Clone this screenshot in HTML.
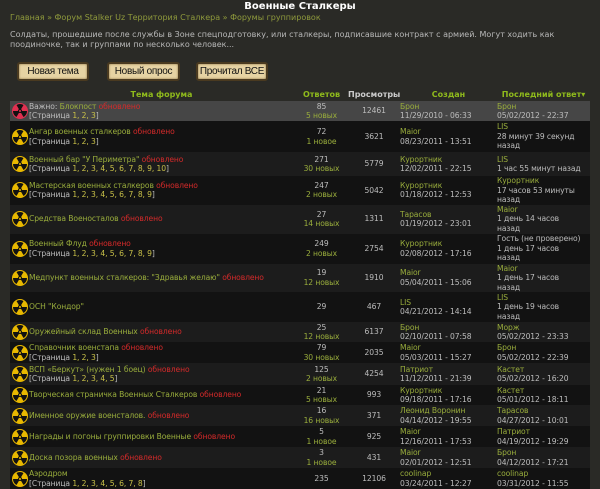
<!DOCTYPE html>
<html><head><meta charset="utf-8">
<style>
*{margin:0;padding:0;box-sizing:border-box}
body{width:600px;height:488px;background:#2a2a26;font-family:"DejaVu Sans","Liberation Sans",sans-serif;font-size:8px;color:#bdbdbd;overflow:hidden;position:relative}
.t{position:absolute;left:0;width:600px;text-align:center;top:1px;color:#fff;font-weight:bold;font-size:10px}
.bc{position:absolute;left:10px;top:13px;color:#8f9a3c;font-size:8px}
.ds{position:absolute;left:10px;top:30px;width:590px;line-height:10px;color:#b8b8b8}
.btn{position:absolute;top:62px;height:19px;background:#e6d3a3;border:2px solid #4a3a20;border-radius:3px;color:#111;font-family:"Liberation Sans",sans-serif;font-size:10px;line-height:15px;text-align:center;white-space:nowrap;letter-spacing:-0.3px;box-shadow:0 0 2px #8a7040 inset}
table{position:absolute;left:10px;top:88px;width:580px;border-collapse:collapse;table-layout:fixed}
th{color:#8fba1c;font-weight:bold;height:13px;font-size:8px;text-align:center;vertical-align:middle;white-space:nowrap}
td{vertical-align:middle;line-height:9.5px;padding:0;font-size:7.6px;letter-spacing:-0.1px;overflow:hidden}
tr.a td{background:#121212}tr.b td{background:#1c1c1c}tr.h td{background:#464646}
.ic{display:block;width:16px;height:16px;margin-left:2px}
.g{color:#99ad3c}.r{color:#d42a2a}.y{color:#c8c048}
.c{text-align:center}.n{color:#99ad3c}
.p{padding-left:1px}
</style></head><body>
<div class="t">Военные Сталкеры</div>
<div class="bc">Главная » Форум Stalker Uz Территория Сталкера » Форумы группировок</div>
<div class="ds">Солдаты, прошедшие после службы в Зоне спецподготовку, или сталкеры, подписавшие контракт с армией. Могут ходить как поодиночке, так и группами по несколько человек...</div>
<div class="btn" style="left:17px;width:72px">Новая тема</div>
<div class="btn" style="left:107px;width:73px">Новый опрос</div>
<div class="btn" style="left:196px;width:72px">Прочитал ВСЕ</div>
<svg width="0" height="0" style="position:absolute"><defs>
<g id="rad"><circle cx="8" cy="8" r="8" fill="#e8b800"/><path d="M8 8 L4.5 2 A7 7 0 0 1 11.5 2Z M8 8 L15 8 A7 7 0 0 1 11.5 14Z M8 8 L4.5 14 A7 7 0 0 1 1 8Z" fill="#111"/><circle cx="8" cy="8" r="2" fill="#111"/><circle cx="8" cy="8" r="1" fill="#e8b800"/></g>
<g id="radr"><circle cx="8" cy="8" r="8" fill="#e03050"/><path d="M8 8 L4.5 2 A7 7 0 0 1 11.5 2Z M8 8 L15 8 A7 7 0 0 1 11.5 14Z M8 8 L4.5 14 A7 7 0 0 1 1 8Z" fill="#111"/><circle cx="8" cy="8" r="2" fill="#111"/><circle cx="8" cy="8" r="1" fill="#e03050"/></g>
</defs></svg>
<table>
<colgroup><col style="width:18px"><col style="width:267px"><col style="width:53px"><col style="width:52px"><col style="width:97px"><col style="width:93px"></colgroup>
<tr><th></th><th>Тема форума</th><th>Ответов</th><th style="color:#ccc">Просмотры</th><th>Создан</th><th>Последний ответ▾</th></tr>
<tr class="h" style="height:20px"><td><svg class="ic"><use href="#radr"/></svg></td><td class="p">Важно: <span class="g">Блокпост</span> <span class="r">обновлено</span><br>[Страница <span class="y">1, 2, 3</span>]</td><td class="c">85<br><span class="n">5 новых</span></td><td class="c">12461</td><td><span class="g">Брон</span><br>11/29/2010 - 06:33</td><td><span class="g">Брон</span><br>05/02/2012 - 22:37</td></tr>
<tr class="a" style="height:31px"><td><svg class="ic"><use href="#rad"/></svg></td><td class="p"><span class="g">Ангар военных сталкеров</span> <span class="r">обновлено</span><br>[Страница <span class="y">1, 2, 3</span>]</td><td class="c">72<br><span class="n">1 новое</span></td><td class="c">3621</td><td><span class="g">Maior</span><br>08/23/2011 - 13:51</td><td><span class="g">LIS</span><br>28 минут 39 секунд назад</td></tr>
<tr class="b" style="height:24px"><td><svg class="ic"><use href="#rad"/></svg></td><td class="p"><span class="g">Военный бар "У Периметра"</span> <span class="r">обновлено</span><br>[Страница <span class="y">1, 2, 3, 4, 5, 6, 7, 8, 9, 10</span>]</td><td class="c">271<br><span class="n">30 новых</span></td><td class="c">5779</td><td><span class="g">Курортник</span><br>12/02/2011 - 22:15</td><td><span class="g">LIS</span><br><span style="white-space:nowrap">1 час 55 минут назад</span></td></tr>
<tr class="a" style="height:28px"><td><svg class="ic"><use href="#rad"/></svg></td><td class="p"><span class="g">Мастерская военных сталкеров</span> <span class="r">обновлено</span><br>[Страница <span class="y">1, 2, 3, 4, 5, 6, 7, 8, 9</span>]</td><td class="c">247<br><span class="n">2 новых</span></td><td class="c">5042</td><td><span class="g">Курортник</span><br>01/18/2012 - 12:53</td><td><span class="g">Курортник</span><br>17 часов 53 минуты<br>назад</td></tr>
<tr class="b" style="height:29px"><td><svg class="ic"><use href="#rad"/></svg></td><td class="p"><span class="g">Средства Военосталов</span> <span class="r">обновлено</span></td><td class="c">27<br><span class="n">14 новых</span></td><td class="c">1311</td><td><span class="g">Тарасов</span><br>01/19/2012 - 23:01</td><td><span class="g">Maior</span><br>1 день 14 часов<br>назад</td></tr>
<tr class="a" style="height:30px"><td><svg class="ic"><use href="#rad"/></svg></td><td class="p"><span class="g">Военный Флуд</span> <span class="r">обновлено</span><br>[Страница <span class="y">1, 2, 3, 4, 5, 6, 7, 8, 9</span>]</td><td class="c">249<br><span class="n">2 новых</span></td><td class="c">2754</td><td><span class="g">Курортник</span><br>02/08/2012 - 17:16</td><td><span style="white-space:nowrap">Гость (не проверено)</span><br>1 день 17 часов<br>назад</td></tr>
<tr class="b" style="height:28px"><td><svg class="ic"><use href="#rad"/></svg></td><td class="p"><span class="g">Медпункт военных сталкеров: "Здравья желаю"</span> <span class="r">обновлено</span></td><td class="c">19<br><span class="n">12 новых</span></td><td class="c">1910</td><td><span class="g">Maior</span><br>05/04/2011 - 15:06</td><td><span class="g">Maior</span><br>1 день 17 часов<br>назад</td></tr>
<tr class="a" style="height:30px"><td><svg class="ic"><use href="#rad"/></svg></td><td class="p"><span class="g">ОСН "Кондор"</span></td><td class="c">29</td><td class="c">467</td><td><span class="g">LIS</span><br>04/21/2012 - 14:14</td><td><span class="g">LIS</span><br>1 день 19 часов<br>назад</td></tr>
<tr class="b" style="height:20px"><td><svg class="ic"><use href="#rad"/></svg></td><td class="p"><span class="g">Оружейный склад Военных</span> <span class="r">обновлено</span></td><td class="c">25<br><span class="n">12 новых</span></td><td class="c">6137</td><td><span class="g">Брон</span><br>02/10/2011 - 07:58</td><td><span class="g">Морж</span><br>05/02/2012 - 23:33</td></tr>
<tr class="a" style="height:21px"><td><svg class="ic"><use href="#rad"/></svg></td><td class="p"><span class="g">Справочник военстапа</span> <span class="r">обновлено</span><br>[Страница <span class="y">1, 2, 3</span>]</td><td class="c">79<br><span class="n">30 новых</span></td><td class="c">2035</td><td><span class="g">Maior</span><br>05/03/2011 - 15:27</td><td><span class="g">Брон</span><br>05/02/2012 - 22:39</td></tr>
<tr class="b" style="height:22px"><td><svg class="ic"><use href="#rad"/></svg></td><td class="p"><span class="g">ВСП «Беркут» (нужен 1 боец)</span> <span class="r">обновлено</span><br>[Страница <span class="y">1, 2, 3, 4, 5</span>]</td><td class="c">125<br><span class="n">2 новых</span></td><td class="c">4254</td><td><span class="g">Патриот</span><br>11/12/2011 - 21:39</td><td><span class="g">Кастет</span><br>05/02/2012 - 16:20</td></tr>
<tr class="a" style="height:20px"><td><svg class="ic"><use href="#rad"/></svg></td><td class="p"><span class="g">Творческая страничка Военных Сталкеров</span> <span class="r">обновлено</span></td><td class="c">21<br><span class="n">5 новых</span></td><td class="c">993</td><td><span class="g">Курортник</span><br>09/18/2011 - 17:16</td><td><span class="g">Кастет</span><br>05/01/2012 - 18:11</td></tr>
<tr class="b" style="height:21px"><td><svg class="ic"><use href="#rad"/></svg></td><td class="p"><span class="g">Именное оружие военсталов.</span> <span class="r">обновлено</span></td><td class="c">16<br><span class="n">16 новых</span></td><td class="c">371</td><td><span class="g">Леонид Воронин</span><br>04/14/2012 - 19:55</td><td><span class="g">Тарасов</span><br>04/27/2012 - 10:01</td></tr>
<tr class="a" style="height:21px"><td><svg class="ic"><use href="#rad"/></svg></td><td class="p"><span class="g">Награды и погоны группировки Военные</span> <span class="r">обновлено</span></td><td class="c">5<br><span class="n">1 новое</span></td><td class="c">925</td><td><span class="g">Maior</span><br>12/16/2011 - 17:53</td><td><span class="g">Патриот</span><br>04/19/2012 - 19:29</td></tr>
<tr class="b" style="height:21px"><td><svg class="ic"><use href="#rad"/></svg></td><td class="p"><span class="g">Доска позора военных</span> <span class="r">обновлено</span></td><td class="c">3<br><span class="n">1 новое</span></td><td class="c">431</td><td><span class="g">Maior</span><br>02/01/2012 - 12:51</td><td><span class="g">Брон</span><br>04/12/2012 - 17:21</td></tr>
<tr class="a" style="height:21px"><td><svg class="ic"><use href="#rad"/></svg></td><td class="p"><span class="g">Аэродром</span><br>[Страница <span class="y">1, 2, 3, 4, 5, 6, 7, 8</span>]</td><td class="c">235</td><td class="c">12106</td><td><span class="g">coolinap</span><br>03/24/2011 - 12:27</td><td><span class="g">coolinap</span><br>03/31/2012 - 11:55</td></tr>
</table>
</body></html>
